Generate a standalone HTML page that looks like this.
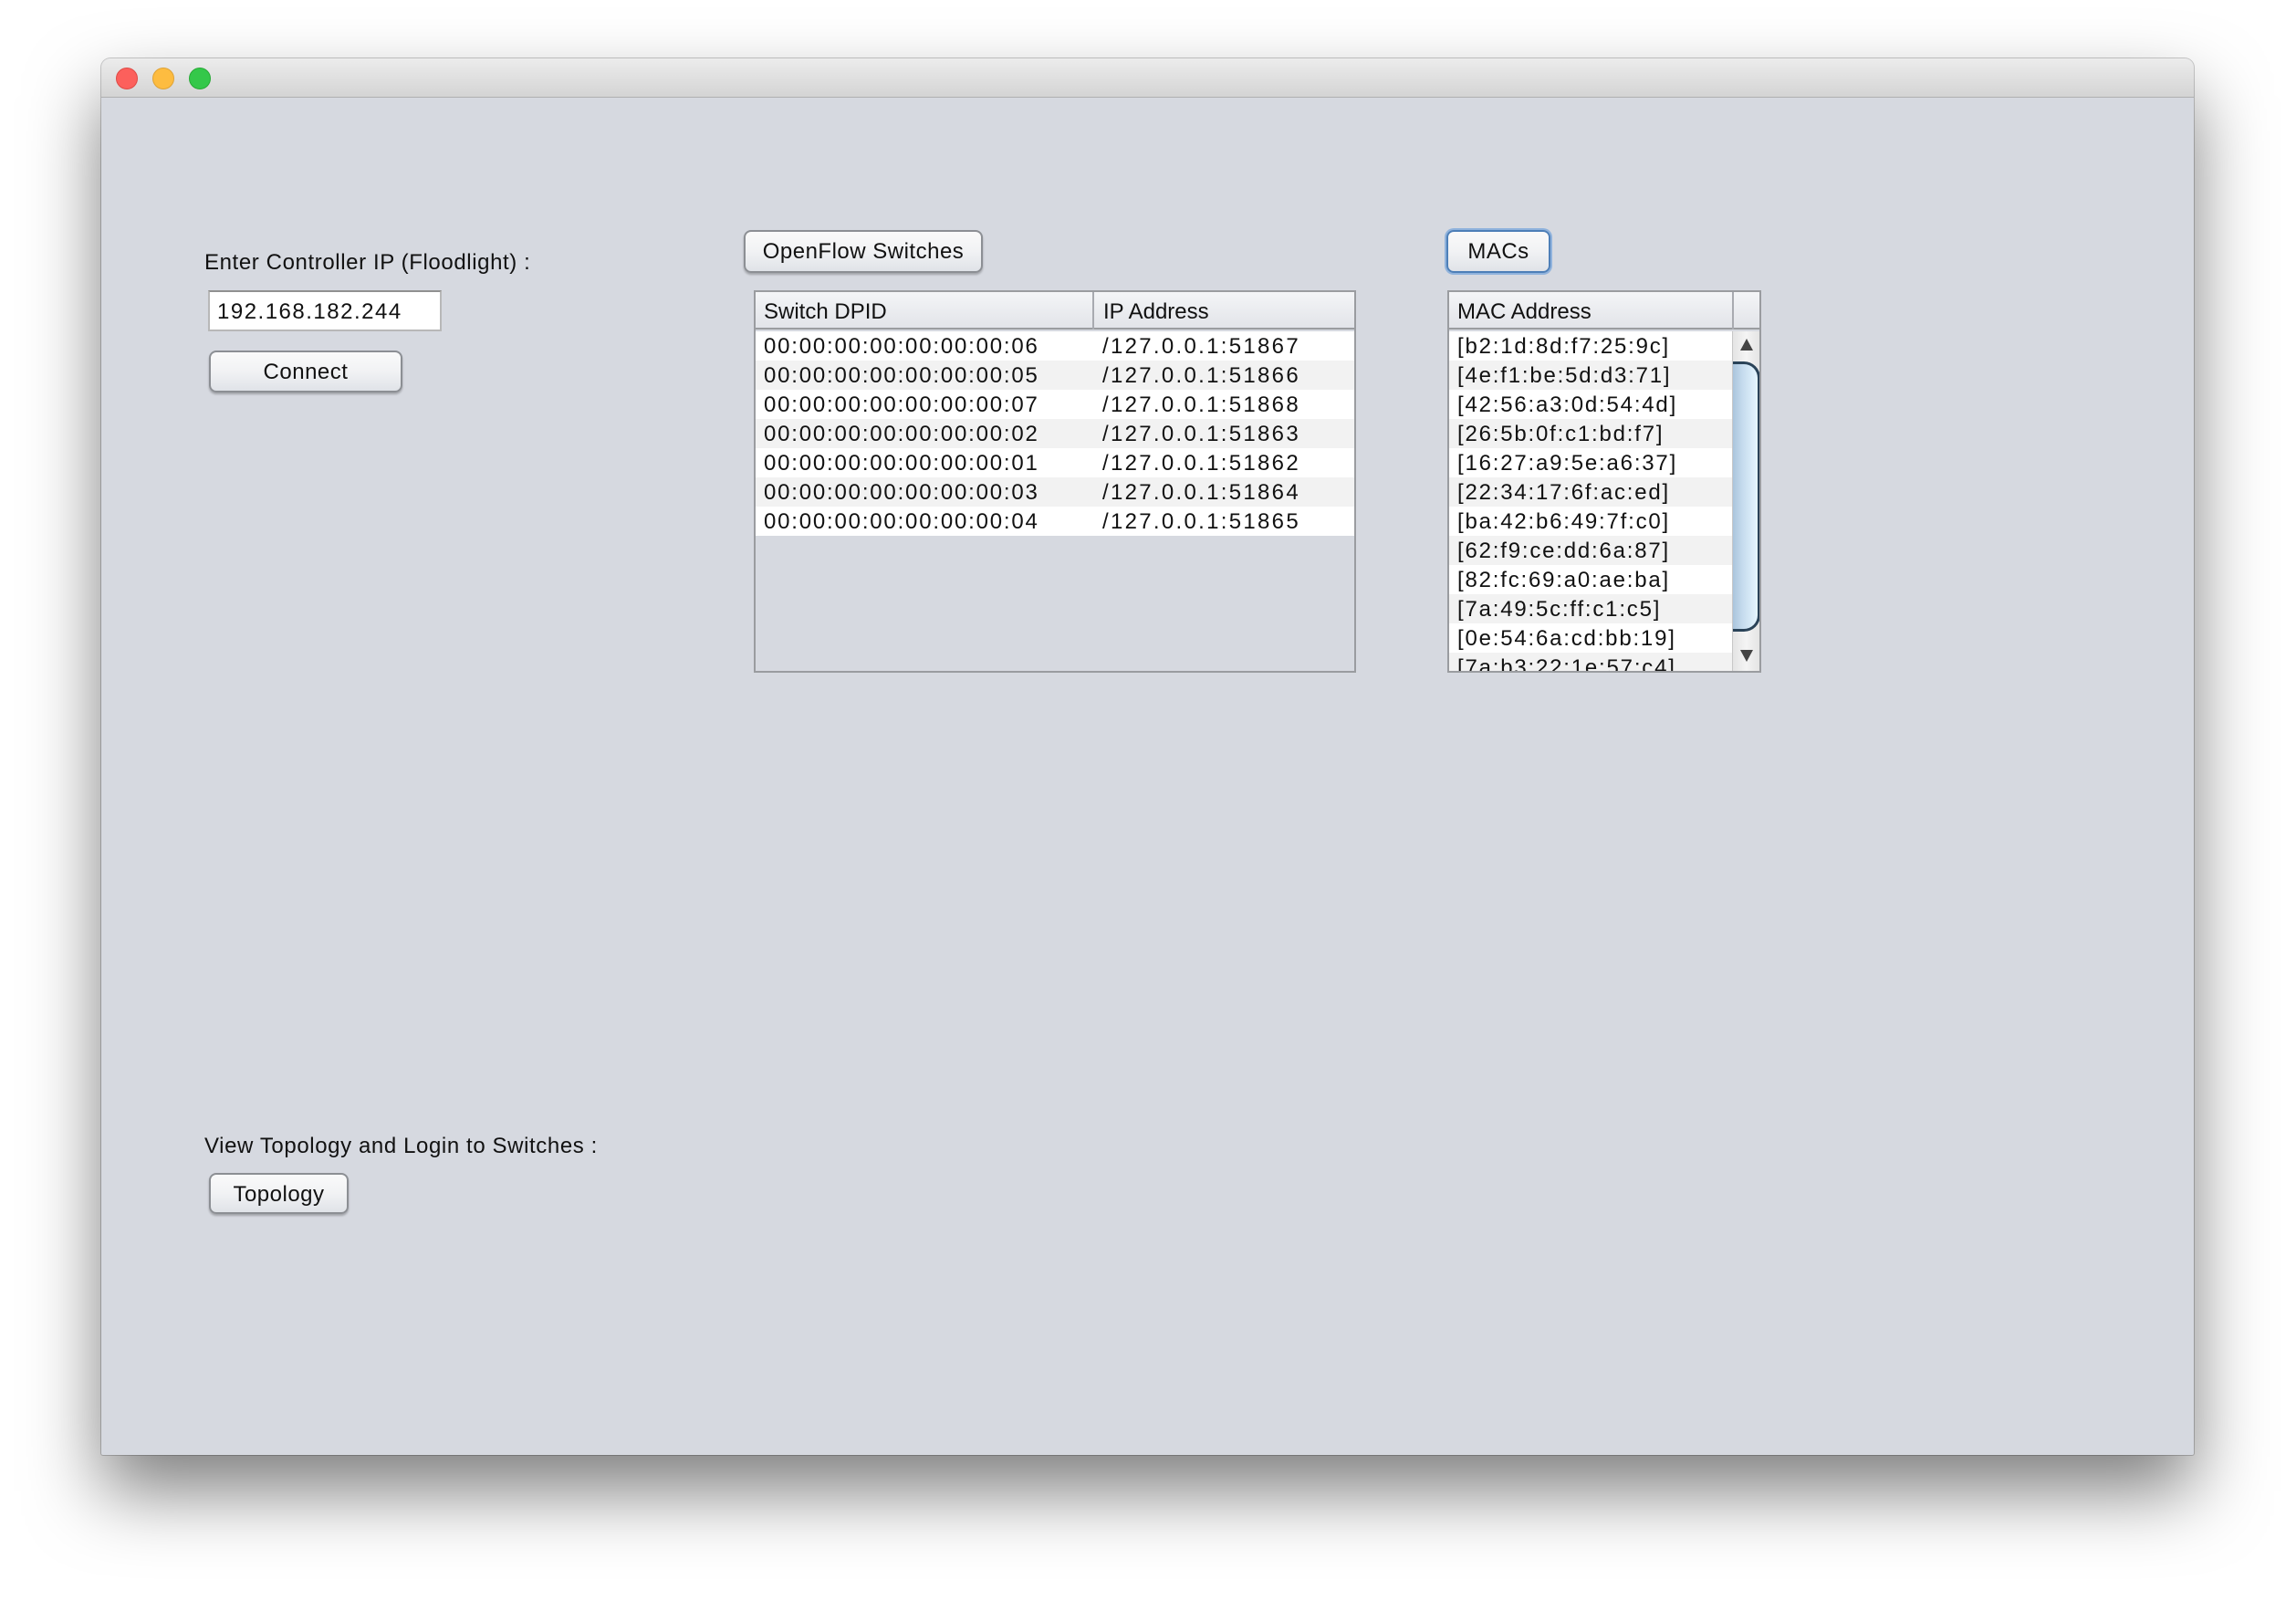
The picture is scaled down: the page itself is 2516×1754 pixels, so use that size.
<!DOCTYPE html>
<html><head><style>
*{margin:0;padding:0;box-sizing:border-box}
body{width:2516px;height:1754px;background:#fff;position:relative;overflow:hidden;font-family:"Liberation Sans",sans-serif;color:#111}
.win{position:absolute;left:111px;top:64px;width:2293px;height:1530px;background:#d6d9e0;border-radius:10px 10px 2px 2px;box-shadow:0 40px 80px rgba(0,0,0,.5),0 0 0 1px rgba(0,0,0,.2);overflow:hidden}
.tb{position:absolute;left:0;top:0;right:0;height:43px;background:linear-gradient(#ececec,#d4d4d4);border-bottom:1px solid #b0b0b0}
.dot{position:absolute;top:10px;width:24px;height:24px;border-radius:50%}
.a{position:absolute}
.lbl{font-size:24px;letter-spacing:.6px}
.btn{position:absolute;border:2px solid #8c8f94;border-radius:8px;background:linear-gradient(#fafafa,#f1f2f4 50%,#e0e3e8);box-shadow:0 2px 2px rgba(0,0,0,.25);font-size:24px;text-align:center;letter-spacing:.5px}
.tbl{position:absolute;background:#d6d9e0;border:2px solid #9a9ca0}
.hd{position:absolute;left:0;top:0;right:0;height:41px;background:linear-gradient(#f4f5f7,#e2e4e9);border-bottom:2px solid #9a9ca0;font-size:24px}
.row{position:absolute;left:0;height:32px;font-size:24px;line-height:34px;letter-spacing:1.8px}
.ip{letter-spacing:2.3px}
</style></head><body>
<div class="win">
 <div class="tb">
  <div class="dot" style="left:16px;background:#fc605c;border:1px solid #de4a45"></div>
  <div class="dot" style="left:56px;background:#fdbc40;border:1px solid #dea235"></div>
  <div class="dot" style="left:96px;background:#34c84a;border:1px solid #27aa35"></div>
 </div>
</div>
<div class="a lbl" style="left:224px;top:274px">Enter Controller IP (Floodlight) :</div>
<div class="a" style="left:228px;top:318px;width:256px;height:45px;background:#fff;border:2px solid #b8b8b8;border-top-color:#909090;font-size:24px;line-height:44px;padding-left:8px;letter-spacing:1.5px">192.168.182.244</div>
<div class="btn" style="left:229px;top:384px;width:212px;height:46px;line-height:43px">Connect</div>

<div class="btn" style="left:815px;top:252px;width:262px;height:47px;line-height:44px">OpenFlow Switches</div>
<div class="btn" style="left:1585px;top:252px;width:114px;height:47px;line-height:44px;border-color:#4d7fb8;box-shadow:0 0 0 2px #8fb2dc">MACs</div>

<div class="tbl" style="left:826px;top:318px;width:660px;height:419px">
 <div class="hd"><span class="a" style="left:9px;top:8px">Switch DPID</span><div class="a" style="left:369px;top:0;width:2px;height:41px;background:#a8aab0"></div><span class="a" style="left:381px;top:8px">IP Address</span></div>
 <div style="position:absolute;left:0;right:0;top:43px">
  <div class="row" style="top:0;width:100%;background:#fff"><span class="a" style="left:9px">00:00:00:00:00:00:00:06</span><span class="a ip" style="left:380px">/127.0.0.1:51867</span></div>
  <div class="row" style="top:32px;width:100%;background:#f2f2f2"><span class="a" style="left:9px">00:00:00:00:00:00:00:05</span><span class="a ip" style="left:380px">/127.0.0.1:51866</span></div>
  <div class="row" style="top:64px;width:100%;background:#fff"><span class="a" style="left:9px">00:00:00:00:00:00:00:07</span><span class="a ip" style="left:380px">/127.0.0.1:51868</span></div>
  <div class="row" style="top:96px;width:100%;background:#f2f2f2"><span class="a" style="left:9px">00:00:00:00:00:00:00:02</span><span class="a ip" style="left:380px">/127.0.0.1:51863</span></div>
  <div class="row" style="top:128px;width:100%;background:#fff"><span class="a" style="left:9px">00:00:00:00:00:00:00:01</span><span class="a ip" style="left:380px">/127.0.0.1:51862</span></div>
  <div class="row" style="top:160px;width:100%;background:#f2f2f2"><span class="a" style="left:9px">00:00:00:00:00:00:00:03</span><span class="a ip" style="left:380px">/127.0.0.1:51864</span></div>
  <div class="row" style="top:192px;width:100%;background:#fff"><span class="a" style="left:9px">00:00:00:00:00:00:00:04</span><span class="a ip" style="left:380px">/127.0.0.1:51865</span></div>
 </div>
</div>

<div class="tbl" style="left:1586px;top:318px;width:344px;height:419px;overflow:hidden">
 <div class="hd"><span class="a" style="left:9px;top:8px">MAC Address</span><div class="a" style="left:310px;top:0;width:2px;height:41px;background:#a8aab0"></div></div>
 <div style="position:absolute;left:0;width:310px;top:43px;bottom:0;overflow:hidden">
  <div class="row" style="top:0;width:100%;background:#fff;padding-left:9px">[b2:1d:8d:f7:25:9c]</div>
  <div class="row" style="top:32px;width:100%;background:#f2f2f2;padding-left:9px">[4e:f1:be:5d:d3:71]</div>
  <div class="row" style="top:64px;width:100%;background:#fff;padding-left:9px">[42:56:a3:0d:54:4d]</div>
  <div class="row" style="top:96px;width:100%;background:#f2f2f2;padding-left:9px">[26:5b:0f:c1:bd:f7]</div>
  <div class="row" style="top:128px;width:100%;background:#fff;padding-left:9px">[16:27:a9:5e:a6:37]</div>
  <div class="row" style="top:160px;width:100%;background:#f2f2f2;padding-left:9px">[22:34:17:6f:ac:ed]</div>
  <div class="row" style="top:192px;width:100%;background:#fff;padding-left:9px">[ba:42:b6:49:7f:c0]</div>
  <div class="row" style="top:224px;width:100%;background:#f2f2f2;padding-left:9px">[62:f9:ce:dd:6a:87]</div>
  <div class="row" style="top:256px;width:100%;background:#fff;padding-left:9px">[82:fc:69:a0:ae:ba]</div>
  <div class="row" style="top:288px;width:100%;background:#f2f2f2;padding-left:9px">[7a:49:5c:ff:c1:c5]</div>
  <div class="row" style="top:320px;width:100%;background:#fff;padding-left:9px">[0e:54:6a:cd:bb:19]</div>
  <div class="row" style="top:352px;width:100%;background:#f2f2f2;padding-left:9px">[7a:b3:22:1e:57:c4]</div>
 </div>
 <div class="a" style="left:310px;top:43px;width:30px;bottom:0;background:linear-gradient(90deg,#e4e4e4,#f4f4f4,#e4e4e4);border-left:1px solid #c8c8c8">
  <div class="a" style="left:8px;top:8px;width:0;height:0;border-left:7px solid transparent;border-right:7px solid transparent;border-bottom:13px solid #444"></div>
  <div class="a" style="left:0;top:33px;width:30px;height:296px;border:3px solid #2a4358;border-left:none;border-radius:0 18px 18px 0;background:linear-gradient(90deg,#aac4dc,#c6dcee 40%,#e6f6ff)"></div>
  <div class="a" style="left:8px;bottom:10px;width:0;height:0;border-left:7px solid transparent;border-right:7px solid transparent;border-top:13px solid #444"></div>
 </div>
</div>

<div class="a lbl" style="left:224px;top:1242px">View Topology and Login to Switches :</div>
<div class="btn" style="left:229px;top:1285px;width:153px;height:45px;line-height:43px">Topology</div>
</body></html>
